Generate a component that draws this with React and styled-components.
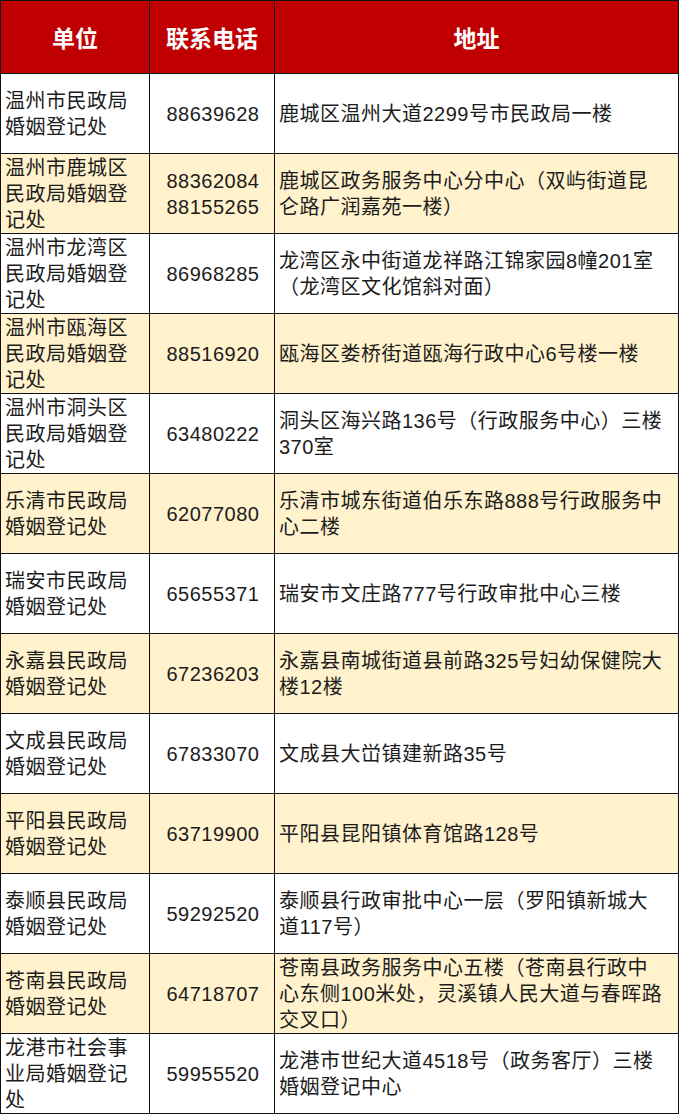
import React from 'react'
import styled, { createGlobalStyle } from 'styled-components'

const GlobalStyle = createGlobalStyle`
  html, body {
    margin: 0;
    padding: 0;
    background: #ffffff;
  }
`

const rows = [
    { unit: ['温州市民政局', '婚姻登记处'], tel: ['88639628'], addr: ['鹿城区温州大道2299号市民政局一楼'] },
    { unit: ['温州市鹿城区', '民政局婚姻登', '记处'], tel: ['88362084', '88155265'], addr: ['鹿城区政务服务中心分中心（双屿街道昆', '仑路广润嘉苑一楼）'] },
    { unit: ['温州市龙湾区', '民政局婚姻登', '记处'], tel: ['86968285'], addr: ['龙湾区永中街道龙祥路江锦家园8幢201室', '（龙湾区文化馆斜对面）'] },
    { unit: ['温州市瓯海区', '民政局婚姻登', '记处'], tel: ['88516920'], addr: ['瓯海区娄桥街道瓯海行政中心6号楼一楼'] },
    { unit: ['温州市洞头区', '民政局婚姻登', '记处'], tel: ['63480222'], addr: ['洞头区海兴路136号（行政服务中心）三楼', '370室'] },
    { unit: ['乐清市民政局', '婚姻登记处'], tel: ['62077080'], addr: ['乐清市城东街道伯乐东路888号行政服务中', '心二楼'] },
    { unit: ['瑞安市民政局', '婚姻登记处'], tel: ['65655371'], addr: ['瑞安市文庄路777号行政审批中心三楼'] },
    { unit: ['永嘉县民政局', '婚姻登记处'], tel: ['67236203'], addr: ['永嘉县南城街道县前路325号妇幼保健院大', '楼12楼'] },
    { unit: ['文成县民政局', '婚姻登记处'], tel: ['67833070'], addr: ['文成县大峃镇建新路35号'] },
    { unit: ['平阳县民政局', '婚姻登记处'], tel: ['63719900'], addr: ['平阳县昆阳镇体育馆路128号'] },
    { unit: ['泰顺县民政局', '婚姻登记处'], tel: ['59292520'], addr: ['泰顺县行政审批中心一层（罗阳镇新城大', '道117号）'] },
    { unit: ['苍南县民政局', '婚姻登记处'], tel: ['64718707'], addr: ['苍南县政务服务中心五楼（苍南县行政中', '心东侧100米处，灵溪镇人民大道与春晖路', '交叉口）'] },
    { unit: ['龙港市社会事', '业局婚姻登记', '处'], tel: ['59955520'], addr: ['龙港市世纪大道4518号（政务客厅）三楼', '婚姻登记中心'] },
]

const Lines = ({ items }) => items.map((t, i) => <Line key={i}>{t}</Line>)

function App() {
    return (
        <>
            <GlobalStyle />
            <Table>
                <colgroup>
                    <col style={{ width: 149 }} />
                    <col style={{ width: 125 }} />
                    <col style={{ width: 404 }} />
                </colgroup>
                <thead>
                    <tr>
                        <HeadCell>单位</HeadCell>
                        <HeadCell>联系电话</HeadCell>
                        <HeadCell>地址</HeadCell>
                    </tr>
                </thead>
                <tbody>
                    {rows.map((r, i) => (
                        <Row key={i} striped={i % 2 === 1}>
                            <Cell><Lines items={r.unit} /></Cell>
                            <Cell align="center"><Lines items={r.tel} /></Cell>
                            <Cell><Lines items={r.addr} /></Cell>
                        </Row>
                    ))}
                </tbody>
            </Table>
        </>
    )
}

export default App

const Table = styled.table`
    border-collapse: collapse;
    table-layout: fixed;
    width: 679px;
    font-family: "Liberation Sans", "Noto Sans CJK SC", sans-serif;
    color: #1c1c1c;
`

const HeadCell = styled.th`
    height: 72px;
    padding: 0;
    background: #c00000;
    color: #ffffff;
    font-size: 23px;
    font-weight: 700;
    text-align: center;
    vertical-align: middle;
    border: 1px solid #111111;
`

const Row = styled.tr`
    height: 80px;
    background: ${props => props.striped ? '#fff2cc' : '#ffffff'};
`

const Cell = styled.td`
    height: 79px;
    padding: 0 2px 0 4px;
    border: 1px solid #111111;
    font-size: 20px;
    line-height: 26px;
    letter-spacing: 0.5px;
    text-align: ${props => props.align || 'left'};
    vertical-align: middle;
    white-space: nowrap;
    overflow: hidden;
`

const Line = styled.div`
    display: block;
`
